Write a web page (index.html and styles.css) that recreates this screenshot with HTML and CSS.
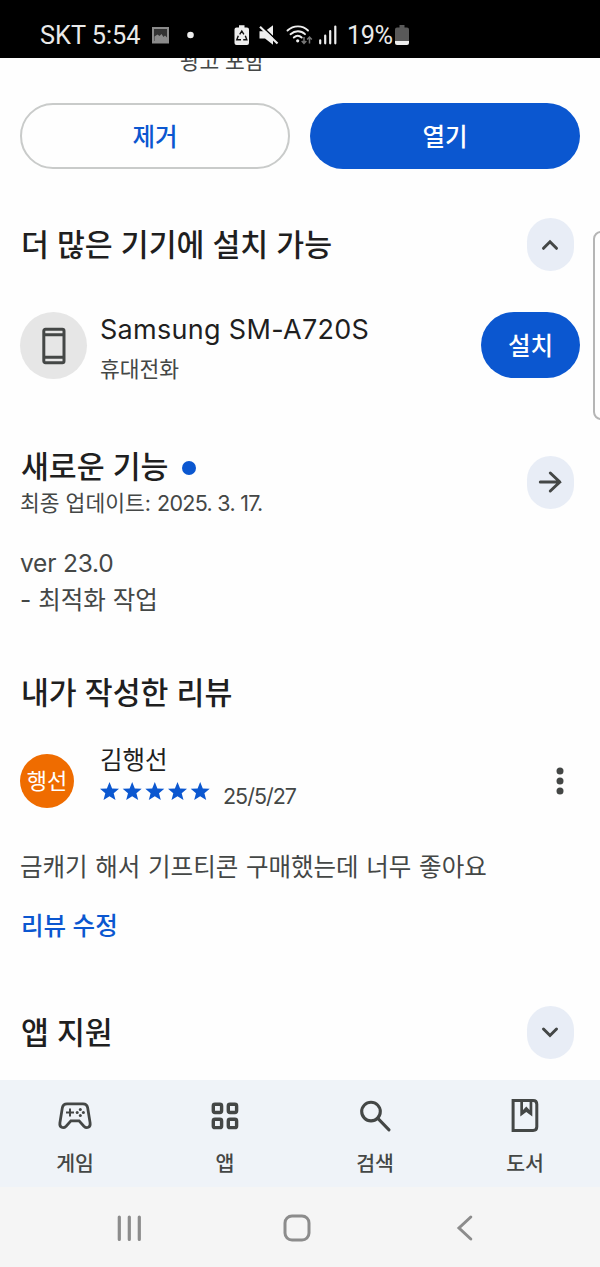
FILE: index.html
```html
<!DOCTYPE html>
<html lang="ko">
<head>
<meta charset="utf-8">
<title>앱 정보</title>
<link rel="stylesheet" href="styles.css">
</head>
<body>
<div class="screen">
  <header class="status">
    <span class="carrier">SKT 5:54</span>
    <svg class="status-icons" width="260" height="24" viewBox="150 24 260 24">
      <path d="M152 27h17v16.500h-17z" fill="#8b8b8b"/>
      <path d="M154 29h13v12h-13z" fill="#333"/>
      <path d="M154.500 41v-4.500l3-2 2 1.500 2-2 2 3 1.500-1.500 2 2v3.500z" fill="#8b8b8b"/>
      <circle cx="190.500" cy="35" r="3.300" fill="#eee"/>
      <path d="M236.500 27.500h2.500v-2.300h5.500v2.300h2.500q2 0 2 2v13.500q0 2-2 2h-10.500q-2 0-2-2v-13.500q0-2 2-2z" fill="#eee"/>
      <path d="M239.700 34.300l2.100-3.300 2.100 3.300M245.300 35.800l1.500 3.900h-3.600M241 39.700h-4.200l1.500-3.900" fill="none" stroke="#111" stroke-width="1.400"/>
      <path d="M259.500 31.300h5.500l8-6v19.500l-8-6.300h-5.500z" fill="#eee"/>
      <path d="M261 25.300l18 17.200" stroke="#000" stroke-width="1.600"/>
      <path d="M260 26.700l17.500 16.800" stroke="#eee" stroke-width="2.200"/>
      <g fill="none" stroke="#eee" stroke-width="1.900" stroke-linecap="round">
        <path d="M287.500 30.500c6-5.500 15-5.500 20.500 0M290.500 34.200c4.500-4 10.500-4 14.500 0M293.800 37.500c2.500-2.300 5.500-2.300 7.900 0"/>
      </g>
      <circle cx="297.700" cy="40.800" r="1.600" fill="#eee"/>
      <path d="M304 37v6M301.700 41l2.300 2.500 2.300-2.500M309.500 43.500v-6M307.200 39.500l2.300-2.500 2.300 2.500" fill="none" stroke="#777" stroke-width="1.500"/>
      <path d="M320.200 40.300v3M325.200 35.700v7.600M330.200 31v12.300M335.300 26.500v16.800" stroke="#eee" stroke-width="2.200" stroke-linecap="round"/>
      <path d="M397 27.500h2.500v-2.500h5v2.500h2.500q2 0 2 2v11.500h-14v-11.500q0-2 2-2z" fill="#595959"/>
      <path d="M395 41h14v2q0 2-2 2h-10q-2 0-2-2z" fill="#eee"/>
    </svg>
    <span class="percent">19%</span>
  </header>

  <main class="content">
    <div class="ads"><span>광고 포함</span></div>
    <div class="actions">
      <button class="btn outline">제거</button>
      <button class="btn filled">열기</button>
    </div>

    <section class="devices">
      <div class="head">
        <h2 class="title">더 많은 기기에 설치 가능</h2>
        <button class="chip" aria-label="접기"><svg width="24" height="24" viewBox="0 0 24 24"><path class="line" d="M5.500 15.300 12 8.800l6.500 6.500"/></svg></button>
      </div>
      <div class="device">
        <div class="device-icon">
          <svg width="26" height="40" viewBox="0 0 26 40"><path class="line" d="M4.500 3.300h16.800q1.700 0 1.700 1.700v30q0 1.700-1.700 1.700H4.500q-1.700 0-1.700-1.700V5q0-1.700 1.700-1.700zM3 8.800h20M3 31.300h20"/></svg>
        </div>
        <div class="device-text">
          <div class="device-name">Samsung SM-A720S</div>
          <div class="device-type">휴대전화</div>
        </div>
        <button class="btn filled small">설치</button>
      </div>
    </section>

    <section class="news">
      <div class="head">
        <div>
          <h2 class="title">새로운 기능<i class="dot"></i></h2>
          <div class="updated">최종 업데이트: <span class="updated-date">2025. 3. 17.</span></div>
        </div>
        <button class="chip" aria-label="자세히"><svg width="28" height="28" viewBox="0 0 28 28"><path class="line" d="M4.300 14h19.500M14.300 5l9.500 9-9.500 9"/></svg></button>
      </div>
      <p class="notes"><span class="ver">ver 23.0</span><br><span>- 최적화 작업</span></p>
    </section>

    <section class="review">
      <h2 class="title">내가 작성한 리뷰</h2>
      <div class="author">
        <div class="avatar">행선</div>
        <div class="author-text">
          <div class="name">김행선</div>
          <div class="rating">
            <svg width="110" height="20" viewBox="0 0 110 20">
              <defs><path id="star" d="M9.500 0l2.600 6.400 6.900.4-5.300 4.400 1.800 6.800-6-3.700-6 3.700 1.800-6.800L0 6.800l6.900-.4z"/></defs>
              <g fill="#0b57d0"><use href="#star"/><use href="#star" x="22.700"/><use href="#star" x="45.300"/><use href="#star" x="68"/><use href="#star" x="90.700"/></g>
            </svg>
            <span class="date">25/5/27</span>
          </div>
        </div>
        <svg class="more" width="8" height="28" viewBox="0 0 8 28"><g fill="#444746"><circle cx="4" cy="4" r="3.500"/><circle cx="4" cy="14" r="3.500"/><circle cx="4" cy="24" r="3.500"/></g></svg>
      </div>
      <p class="comment">금캐기 해서 기프티콘 구매했는데 너무 좋아요</p>
      <a class="edit">리뷰 수정</a>
    </section>

    <section class="support">
      <div class="head">
        <h2 class="title">앱 지원</h2>
        <button class="chip" aria-label="펼치기"><svg width="24" height="24" viewBox="0 0 24 24"><path class="line" d="M5.500 8 12 14.500 18.500 8"/></svg></button>
      </div>
    </section>
    <div class="edge-panel"></div>
  </main>

  <nav class="tabs">
    <a class="tab"><svg width="36" height="36" viewBox="0 0 36 36">
      <path d="M10 5.800h16q3.900 0 4.600 3.600l2.500 15.500c.6 4.700-3.400 6-6.200 3.300l-4.800-5.300h-8.200l-4.800 5.300c-2.800 2.700-6.800 1.400-6.200-3.300L5.400 9.400q.7-3.600 4.600-3.600z" fill="none" stroke="#444746" stroke-width="2.800"/>
      <path d="M9 14.500h8M13 10.500v8" stroke="#444746" stroke-width="2"/>
      <g fill="#444746"><circle cx="20.200" cy="14.500" r="1.500"/><circle cx="26.400" cy="14.500" r="1.500"/><circle cx="23.300" cy="11.400" r="1.500"/><circle cx="23.300" cy="17.600" r="1.500"/></g></svg><span>게임</span></a>
    <a class="tab"><svg width="36" height="36" viewBox="0 0 36 36"><g fill="none" stroke="#444746" stroke-width="3.400"><rect x="6.300" y="6.200" width="8.300" height="8.300" rx="1.700"/><rect x="21.300" y="6.200" width="8.300" height="8.300" rx="1.700"/><rect x="6.300" y="21.300" width="8.300" height="8.300" rx="1.700"/><rect x="21.300" y="21.300" width="8.300" height="8.300" rx="1.700"/></g></svg><span>앱</span></a>
    <a class="tab"><svg width="36" height="36" viewBox="0 0 36 36"><g fill="none" stroke="#444746" stroke-width="3.100" stroke-linecap="round"><circle cx="14" cy="13.600" r="9.300"/><path d="M20.600 20.200 32 31.800"/></g></svg><span>검색</span></a>
    <a class="tab"><svg width="36" height="36" viewBox="0 0 36 36"><path d="M6.100 2.500h20q3.700 0 3.700 3.700v22.500q0 3.700-3.700 3.700h-20z" fill="none" stroke="#444746" stroke-width="3"/><path d="M13.300 3v15.500l6-4.500 6 4.500V3h-2.700v9l-3.300-3.500L16 12V3z" fill="#444746"/></svg><span>도서</span></a>
  </nav>

  <footer class="system">
    <svg width="28" height="28" viewBox="0 0 28 28"><path d="M4.300 3v22.500M14.300 3v22.500M24.300 3v22.500" stroke="#8c8c8c" stroke-width="3.200" stroke-linecap="round"/></svg>
    <svg width="28" height="28" viewBox="0 0 28 28"><rect x="2" y="2" width="24" height="24" rx="7" fill="none" stroke="#8c8c8c" stroke-width="3"/></svg>
    <svg width="18" height="28" viewBox="0 0 18 28"><path d="M14.800 3 3 14l11.800 11" fill="none" stroke="#8c8c8c" stroke-width="3" stroke-linecap="round"/></svg>
  </footer>
</div>
</body>
</html>
```
FILE: styles.css
```css
* { box-sizing: border-box; }
body { margin: 0; font-family: Inter, "Noto Sans CJK KR", sans-serif; color: #1f1f1f; background: #fefefe; }
.screen { display: flex; flex-direction: column; width: 600px; height: 1267px; overflow: hidden; }
h2, p { margin: 0; }
button { border: 0; padding: 0; font-family: inherit; color: inherit; }
span { white-space: nowrap; }

.status { display: flex; align-items: center; position: relative; flex: none; height: 58px; padding: 14px 0 0 40px; background: #000; color: #e9e9e9; font: 25.300px/44px Roboto, sans-serif; }
.status-icons { position: absolute; left: 150px; top: 24px; }
.percent { margin-left: 206px; letter-spacing: -.5px; }
.carrier { width: 101px; }

.content { position: relative; flex: none; height: 1022px; padding: 0 20px; overflow: hidden; }
.ads { height: 45px; padding-left: 160px; font-size: 21.500px; line-height: 6px; letter-spacing: -.2px; color: #444746; }
.actions { display: grid; grid-template-columns: 1fr 1fr; gap: 20px; }
.btn { height: 66px; border-radius: 33px; font-size: 24.500px; font-weight: 500; line-height: 68px; text-align: center; }
.outline { border: 2px solid #c9cbca; line-height: 64px; background: #fefefe; color: #0b57d0; }
.filled { background: #0b57d0; color: #fff; }
.small { width: 99px; }

.head { display: flex; align-items: center; justify-content: space-between; padding-right: 6.500px; }
.title { padding-left: 1px; font-size: 30.300px; line-height: 36px; font-weight: 500; white-space: nowrap; }
.chip { display: flex; align-items: center; justify-content: center; width: 47px; height: 53px; border-radius: 23.500px; background: #e8edf6; }
.line { fill: none; stroke: #444746; stroke-width: 3; stroke-linecap: round; }

.devices { height: 280px; padding-top: 49px; }
.device { display: flex; align-items: flex-start; margin-top: 41px; }
.device-icon { display: flex; align-items: center; justify-content: center; width: 67px; height: 67px; border-radius: 50%; background: #e6e6e6; }
.device-text { flex: 1; padding-left: 13px; }
.device-name { font-size: 27px; line-height: 36px; letter-spacing: .3px; }
.device-type { margin-top: 3px; font-size: 21.500px; line-height: 36px; color: #444746; }

.news { height: 215px; }
.news .chip { margin-bottom: 6px; }
.dot { display: inline-block; width: 14px; height: 14px; margin-left: 14px; border-radius: 50%; background: #0b57d0; vertical-align: 3px; }
.updated { font-size: 21.500px; line-height: 36px; color: #444746; }
.updated-date { letter-spacing: -.7px; }
.notes { margin-top: 24px; font-size: 24.500px; line-height: 37px; color: #444746; }
.ver { letter-spacing: -.2px; }

.review { height: 342px; padding-top: 11px; }
.author { display: flex; align-items: center; margin-top: 32px; padding-right: 16px; }
.avatar { width: 54px; height: 54px; margin-top: 11px; border-radius: 50%; background: #ef6c00; color: #fff; font-size: 22px; line-height: 54px; text-align: center; white-space: nowrap; }
.author-text { flex: 1; padding-left: 26px; }
.more { margin-top: 11px; }
.name { font-size: 24.500px; line-height: 32px; }
.rating { display: flex; align-items: flex-start; height: 32px; padding-top: 6px; }
.date { margin-left: 13px; font-size: 21.500px; line-height: 28px; letter-spacing: -1px; color: #444746; }
.comment { margin-top: 41px; font-size: 24.500px; line-height: 36px; word-spacing: .8px; color: #444746; white-space: nowrap; }
.edit { display: block; margin-top: 23px; padding-left: 1px; font-size: 24.500px; line-height: 36px; font-weight: 500; color: #0b57d0; }

.edge-panel { position: absolute; top: 173px; right: -10px; width: 17px; height: 189px; border: 2px solid #b5b5b5; border-radius: 8px; }

.tabs { display: grid; grid-template-columns: repeat(4, 1fr); flex: none; height: 107px; background: #eff3f8; }
.tab { display: flex; flex-direction: column; align-items: center; padding-top: 18px; font-size: 20.500px; line-height: 30px; font-weight: 500; color: #444746; }
.tab span { margin-top: 15px; }
.system { display: flex; flex: 1; align-items: center; padding: 2px 0 0 115px; background: #f5f5f5; }
.system svg:nth-child(2) { margin-left: 140px; }
.system svg:nth-child(3) { margin-left: 145px; }
```
